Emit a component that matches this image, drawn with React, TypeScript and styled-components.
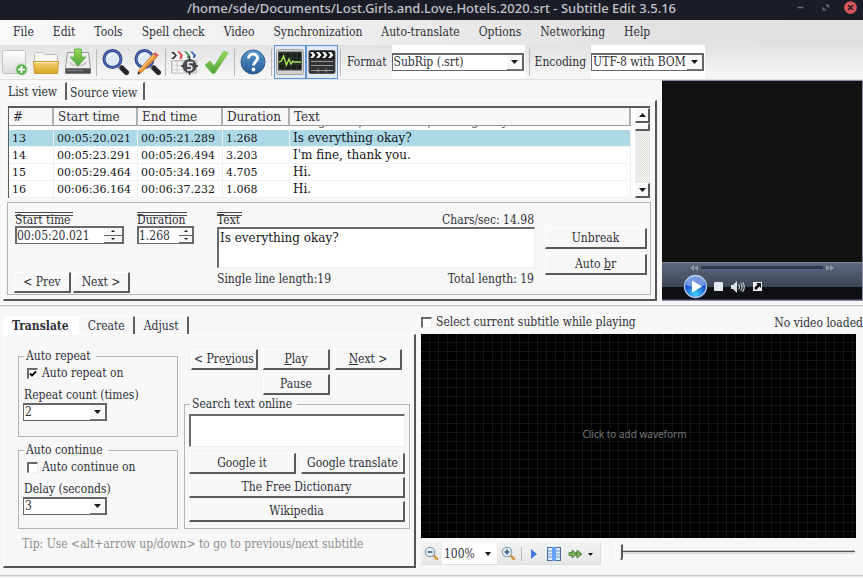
import React, { useState } from "react";
import styled, { createGlobalStyle, css } from "styled-components";

const face = "#f7f7f7";
const ink = "#303038";
const dark = "#4a4a4a";
const soft = "#b4b4b4";
const uiFont = '"DejaVu Serif Condensed", "DejaVu Serif", serif';

const raised = css`
  border-style: solid;
  border-width: 1px 2px 2px 1px;
  border-color: #ffffff #5a5a5a #5a5a5a #ffffff;
`;

const sunken = css`
  border-style: solid;
  border-width: 2px 1px 1px 2px;
  border-color: #6a6a6a #eeeeee #eeeeee #6a6a6a;
`;

const GlobalStyle = createGlobalStyle`
  * { box-sizing: border-box; }
  body { margin: 0; background: ${face}; color: ${ink}; font: 12px/16px ${uiFont}; }
  button, input, select, textarea { font: inherit; color: inherit; margin: 0; border-radius: 0; }
  button { padding: 0; cursor: default; white-space: nowrap; }
  svg { display: block; }
`;

const Window = styled.div`
  min-height: 100vh;
  display: flex;
  flex-direction: column;
  background: ${face};
`;

const TitleBar = styled.header`
  height: 20px;
  display: grid;
  grid-template-columns: 1fr auto 1fr;
  background: #1b1d26;
`;

const Title = styled.h1`
  grid-column: 2;
  margin: 0;
  font: 500 13px/16px "Noto Sans", sans-serif;
  color: #c2c4c8;
  white-space: nowrap;
`;

const WindowButtons = styled.div`
  display: flex;
  justify-content: flex-end;
  gap: 10px;
  padding: 0 5px 0 0;
`;

const WindowButton = styled.button`
  width: 15px;
  height: 15px;
  border: 0;
  background: none;
`;

const MenuBar = styled.nav`
  height: 25px;
  display: flex;
  gap: 19px;
  padding: 0 13px;
  background: linear-gradient(90deg, #f9f9f9, #e2e2e2 75%, #e0e0e0);
`;

const MenuItem = styled.button`
  height: 23px;
  border: 0;
  background: none;
`;

const ToolBar = styled.div`
  height: 35px;
  display: flex;
  align-items: stretch;
  background: linear-gradient(#e2e2e2, #f7f7f7);
  border-bottom: 1px solid #e0e0e0;
`;

const ToolButton = styled.button<{ $active?: boolean; $narrow?: boolean }>`
  width: ${(p) => (p.$narrow ? 30 : 32)}px;
  flex: none;
  display: flex;
  align-items: center;
  justify-content: center;
  background: ${(p) => (p.$active ? "#e2e9f5" : "transparent")};
  border: 1px solid ${(p) => (p.$active ? "#5c93d6" : "transparent")};
`;

const Separator = styled.span<{ $small?: boolean }>`
  width: 1px;
  flex: none;
  margin: ${(p) => (p.$small ? "4px 1px 3px 4px" : "4px 2px 3px")};
  background: #b9b9b9;
`;

const ToolLabel = styled.label`
  align-self: center;
  padding: 0 5px 0 4px;
`;

const ComboSlot = styled.div`
  display: flex;
  align-items: center;
  background: #ffffff;
  padding-right: 1px;
`;

const ComboBox = styled.span<{ $width: number }>`
  width: ${(p) => p.$width}px;
  height: 18px;
  display: grid;
  grid-template-columns: 1fr 15px;
  background: #ffffff;
  border: 1px solid #666666;
  border-width: 2px 2px 1px 1px;
`;

const NativeSelect = styled.select`
  grid-area: 1 / 1 / 2 / 3;
  min-width: 0;
  height: 15px;
  line-height: 15px;
  padding: 0 0 0 1px;
  border: 0;
  outline: 0;
  background: transparent;
  appearance: none;
`;

const ComboArrow = styled.span`
  grid-area: 1 / 2;
  display: flex;
  align-items: center;
  justify-content: center;
  background: ${face};
  border-bottom: 1px solid #777777;
  pointer-events: none;
`;

const Upper = styled.section`
  display: grid;
  grid-template-columns: minmax(0, 1fr) 201px;
  gap: 5px;
`;

const Lower = styled.section`
  display: grid;
  grid-template-columns: 416px minmax(0, 1fr);
  gap: 5px;
`;

const Splitter = styled.hr`
  width: 100%;
  height: 3px;
  margin: 4px 0 0;
  border: 0;
  border-top: 1px solid #c9c9c9;
  border-bottom: 1px solid #ffffff;
  background: #e2e2e2;
`;

const Tabbed = styled.div<{ $inset: number }>`
  padding: ${(p) => p.$inset}px 0 0 3px;
  min-width: 0;
`;

const TabStrip = styled.div`
  height: 18px;
  display: flex;
`;

const Tab = styled.button<{ $selected?: boolean; $white?: boolean }>`
  padding: ${(p) => (p.$selected ? "0 8px 0 9px" : "0 8px 0 9px")};
  border: 0;
  border-top: 1px solid #ffffff;
  border-right: 2px solid ${(p) => (p.$white ? "#ffffff" : "#5f5f5f")};
  background: ${(p) => (p.$white ? "#ffffff" : face)};
  font-weight: ${(p) => (p.$white ? "bold" : "normal")};
`;

const ListTab = styled(Tab)`
  padding: ${(p) => (p.$selected ? "0 8px 0 5px" : "2px 6px 0 3px")};
`;

const TabPage = styled.div<{ $pad: string }>`
  padding: ${(p) => p.$pad};
  border: solid #ffffff;
  border-width: 1px 2px 2px 1px;
  border-right-color: #555555;
  border-bottom-color: #555555;
`;

const ListFrame = styled.div`
  height: 92px;
  display: flex;
  gap: 4px;
  background: #ffffff;
  border: solid #5c5c5c;
  border-width: 2px 0 0 1px;
  overflow: hidden;
`;

const SubtitleTable = styled.table`
  flex: 1;
  min-width: 0;
  table-layout: fixed;
  border-collapse: separate;
  border-spacing: 0;
  font-family: "DejaVu Serif", serif;
  font-size: 11px;
  color: #15151a;
`;

const Column = styled.col<{ $width?: number }>`
  width: ${(p) => (p.$width ? `${p.$width}px` : "auto")};
`;

const HeadCell = styled.th`
  height: 18px;
  padding: 0 4px;
  text-align: left;
  font-size: 12px;
  font-weight: normal;
  line-height: 16px;
  color: ${ink};
  background: ${face};
  border-right: 2px solid #b0b0b0;
  border-bottom: 1px solid #999999;
`;

const BodyRow = styled.tr<{ $selected?: boolean }>`
  background: ${(p) => (p.$selected ? "#add8e6" : "#ffffff")};
`;

const BodyCell = styled.td`
  height: 17px;
  padding: 1px 2px 0 3px;
  line-height: 15px;
  white-space: nowrap;
  border-right: 1px solid #eeeeee;
  border-bottom: 1px solid #f2f2f2;

  &:last-child { font-size: 12px; }
`;

const ClippedCell = styled.td`
  height: 4px;
  padding: 0 3px;
`;

const ClippedText = styled.div`
  height: 4px;
  display: flex;
  align-items: flex-end;
  overflow: hidden;
  line-height: 14px;
  white-space: nowrap;
`;

const ScrollBar = styled.div`
  width: 15px;
  flex: none;
  display: flex;
  flex-direction: column;
  background: repeating-conic-gradient(#e2e0dc 0 25%, #f6f5f3 0 50%) 0 0 / 2px 2px;
`;

const ScrollButton = styled.button`
  ${raised}
  height: 15px;
  display: flex;
  align-items: center;
  justify-content: center;
  background: ${face};
`;

const ScrollThumb = styled.span`
  ${raised}
  height: 8px;
  margin-bottom: auto;
  background: ${face};
`;

const EditGroup = styled.div`
  height: 93px;
  display: flex;
  margin: 4px -1px 0 -1px;
  padding: 9px 3px 0 6px;
  border: 1px solid ${soft};
`;

const TimeColumn = styled.div`
  width: 203px;
  flex: none;
  display: flex;
  flex-direction: column;
  justify-content: space-between;
  padding-bottom: 1px;
`;

const FieldRow = styled.div`
  display: flex;
  gap: 13px;
  padding-left: 1px;
`;

const Field = styled.div`
  display: flex;
  flex-direction: column;
  align-items: flex-start;
`;

const LinedLabel = styled.label`
  height: 14px;
  padding-right: 2px;
  line-height: 16px;
  background:
    linear-gradient(${dark}, ${dark}) 0 0 / 100% 1px no-repeat,
    linear-gradient(${dark}, ${dark}) 0 3px / 100% 1px no-repeat;
`;

const Spinner = styled.div<{ $width: number }>`
  width: ${(p) => p.$width}px;
  height: 18px;
  display: flex;
  background: #ffffff;
  border: solid #6a6a6a;
  border-width: 2px 2px 1px 2px;
`;

const SpinInput = styled.input`
  flex: 1;
  min-width: 0;
  height: 15px;
  padding: 0;
  border: 0;
  outline: 0;
  background: transparent;
`;

const SpinButtons = styled.div<{ $width: number }>`
  width: ${(p) => p.$width}px;
  display: flex;
  flex-direction: column;
`;

const SpinButton = styled.button`
  flex: 1;
  min-height: 0;
  display: flex;
  align-items: center;
  justify-content: center;
  border: 0;
  border-bottom: 1px solid #666666;
  background: ${face};
`;

const ButtonRow = styled.div<{ $gap: number }>`
  display: flex;
  gap: ${(p) => p.$gap}px;
`;

const PushButton = styled.button<{ $width?: number }>`
  ${raised}
  ${(p) => (p.$width ? `width: ${p.$width}px;` : "flex: 1;")}
  height: 21px;
  flex-shrink: 0;
  line-height: 16px;
  background: ${face};
`;

const TextColumn = styled.div`
  flex: 1;
  min-width: 0;
`;

const SpreadRow = styled.div`
  height: 15px;
  display: flex;
  justify-content: space-between;
  padding-right: 1px;
`;

const TextArea = styled.textarea<{ $height: number }>`
  ${sunken}
  display: block;
  width: 100%;
  height: ${(p) => p.$height}px;
  margin-bottom: 3px;
  padding: 1px;
  resize: none;
  outline: 0;
  background: #ffffff;
  color: #15151a;
  font: 12px/16px "DejaVu Serif", serif;
`;

const BreakColumn = styled.div`
  width: 112px;
  flex: none;
  display: flex;
  flex-direction: column;
  gap: 5px;
  padding: 16px 0 0 10px;

  > button { flex: none; }
`;

const Video = styled.div`
  display: flex;
  flex-direction: column;
  background: #111111;
  border: solid #8d8da8;
  border-width: 1px 1px 1px 0;
`;

const Screen = styled.div`
  flex: 1;
`;

const Player = styled.div`
  height: 38px;
  background: linear-gradient(#5d6780, #3d4454 24px, #0f1014 24px, #0f1014);
  border-top: 1px solid #7b849a;
  border-bottom: 1px solid #34365c;
`;

const SeekRow = styled.div`
  height: 10px;
  display: flex;
  align-items: center;
  gap: 3px;
  padding: 0 28px;
`;

const SeekTrack = styled.span`
  flex: 1;
  height: 5px;
  background: #343949;
  border-bottom: 2px solid #566288;
`;

const PlayerButtons = styled.div`
  display: flex;
  align-items: center;
  padding: 1px 0 0 21px;
  gap: 6px;
`;

const IconButton = styled.button<{ $width: number }>`
  width: ${(p) => p.$width}px;
  flex: none;
  display: flex;
  align-items: center;
  justify-content: center;
  border: 0;
  background: none;
`;

const TranslateGrid = styled.div`
  display: grid;
  grid-template-columns: 160px minmax(0, 1fr);
  column-gap: 6px;
`;

const Stack = styled.div`
  display: flex;
  flex-direction: column;
  gap: 5px;
`;

const Group = styled.fieldset<{ $height: number }>`
  height: ${(p) => p.$height}px;
  min-width: 0;
  margin: 0;
  padding: 0 4px;
  border: 1px solid ${soft};
`;

const Legend = styled.legend`
  margin-left: 1px;
  padding: 0 5px 0 2px;
  line-height: 16px;
`;

const CheckRow = styled.label<{ $indent: number }>`
  display: flex;
  align-items: center;
  gap: 4px;
  height: 18px;
  padding-left: ${(p) => p.$indent}px;
`;

const Check = styled.input`
  ${sunken}
  appearance: none;
  width: 11px;
  height: 11px;
  margin: 0;
  background: #ffffff;

  &:checked {
    background: #ffffff
      url("data:image/svg+xml,%3Csvg xmlns='http://www.w3.org/2000/svg' viewBox='0 0 8 8'%3E%3Cpath d='M1 3.4 3 5.6 7 1.4' fill='none' stroke='%23000' stroke-width='2'/%3E%3C/svg%3E")
      center / 8px 8px no-repeat;
  }
`;

const BlockLabel = styled.label`
  display: block;
  margin-top: 5px;
  padding-left: 1px;
  line-height: 16px;
`;

const PlayGrid = styled.div`
  display: grid;
  grid-template-columns: repeat(3, 67px);
  align-content: start;
  gap: 4px 5px;
  padding: 1px 0 0 7px;
  height: 48px;

  > button:last-child { grid-column: 2; }
`;

const SearchStack = styled.div`
  display: flex;
  flex-direction: column;
  gap: 3px;
  padding-top: 2px;

  > button { flex: none; }
`;

const Tip = styled.p`
  margin: 7px 0 0 4px;
  color: #8e8e8e;
  white-space: nowrap;
`;

const WavePane = styled.div`
  display: flex;
  flex-direction: column;
  padding-top: 5px;
  min-width: 0;
`;

const WaveHeader = styled.div`
  height: 21px;
  display: flex;
  justify-content: space-between;
  align-items: flex-start;
  line-height: 20px;
  white-space: nowrap;
`;

const Waveform = styled.div`
  height: 204px;
  display: flex;
  align-items: center;
  justify-content: center;
  margin-right: 7px;
  padding: 0 8px 5px 0;
  background:
    linear-gradient(90deg, transparent 8px, #141414 8px) 0 0 / 9px 9px,
    linear-gradient(transparent 8px, #141414 8px) 0 0 / 9px 9px,
    #000000;
  font: 10px/14px "Noto Sans", sans-serif;
  color: #77777a;
`;

const WaveControls = styled.div`
  display: flex;
  align-items: flex-start;
  gap: 13px;
  padding: 5px 8px 0 0;
`;

const WaveTools = styled.div`
  width: 180px;
  height: 22px;
  flex: none;
  display: flex;
  align-items: stretch;
  background: linear-gradient(#f2f2f2, #e6e6e6);
  border: solid #dddddd;
  border-width: 0 1px 1px 0;
`;

const ZoomBox = styled.span`
  width: 55px;
  display: grid;
  grid-template-columns: 1fr 18px;
  align-items: center;
  padding-left: 1px;
  background: #ffffff;
`;

const ZoomSelect = styled(NativeSelect)`
  height: 18px;
  line-height: 16px;
`;

const ZoomArrow = styled.span`
  grid-area: 1 / 2;
  display: flex;
  justify-content: center;
  pointer-events: none;
`;

const Slider = styled.input`
  flex: 1;
  min-width: 0;
  height: 18px;
  margin: 0;
  appearance: none;
  background: linear-gradient(#c9c9c9 1px, #555555 1px, #555555 2px, #dedede 2px) 0 7px / 100% 4px no-repeat;

  &::-webkit-slider-thumb {
    appearance: none;
    width: 9px;
    height: 17px;
    background: ${face};
    border: solid #ffffff;
    border-width: 1px 2px 1px 1px;
    border-right-color: #555555;
    border-radius: 0 0 4px 4px;
  }
`;

const BottomLine = styled(Splitter)`
  margin-top: 7px;
`;

const Arrow = ({ up = false, w = 7 }: { up?: boolean; w?: number }) => (
  <svg width={w} height={w > 4 ? 4 : 2} viewBox="0 0 7 4" preserveAspectRatio="none" aria-hidden>
    <path d={up ? "M0 4 3.5 0 7 4Z" : "M0 0 3.5 4 7 0Z"} fill="#15151c" />
  </svg>
);

const Combo = ({ id, width, options }: { id: string; width: number; options: string[] }) => (
  <ComboBox $width={width}>
    <NativeSelect id={id}>
      {options.map((o) => (
        <option key={o}>{o}</option>
      ))}
    </NativeSelect>
    <ComboArrow>
      <Arrow />
    </ComboArrow>
  </ComboBox>
);

const Spin = ({ id, width, value, step }: { id: string; width: number; value: string; step: number }) => (
  <Spinner $width={width}>
    <SpinInput id={id} defaultValue={value} />
    <SpinButtons $width={step}>
      <SpinButton aria-label="Increase">
        <Arrow up w={4} />
      </SpinButton>
      <SpinButton aria-label="Decrease">
        <Arrow w={4} />
      </SpinButton>
    </SpinButtons>
  </Spinner>
);

const Lens = () => (
  <>
    <path d="m18 18 7 7" stroke="#8f9298" strokeWidth="4" />
    <path d="m21 20 4.500 4.500" stroke="#25262b" strokeWidth="5" strokeLinecap="round" />
    <circle cx="11.5" cy="11" r="8.500" fill="#dfeaf5" stroke="#2c3f88" strokeWidth="3" />
    <circle cx="11.5" cy="11" r="8.500" fill="none" stroke="#5878c8" strokeWidth="1" />
    <path d="M6 11c0-4 3-6 7-5-3 1-5 2-7 5Z" fill="#fff" />
  </>
);

const Icon = ({ name }: { name: string }) => (
  <svg width="28" height="28" viewBox="0 0 28 28" fill="none" aria-hidden>
    <defs>
      <linearGradient id="paper" x2="0" y2="1"><stop stopColor="#fff" /><stop offset="1" stopColor="#dcdcdc" /></linearGradient>
      <linearGradient id="gold" x2="0" y2="1"><stop stopColor="#f7d478" /><stop offset="1" stopColor="#dba520" /></linearGradient>
      <linearGradient id="leaf" x2="0" y2="1"><stop stopColor="#9bd85a" /><stop offset="1" stopColor="#4ba53a" /></linearGradient>
      <linearGradient id="sky" x2="0" y2="1"><stop stopColor="#5b9bd0" /><stop offset="1" stopColor="#24588f" /></linearGradient>
    </defs>
    {name === "new" && (
      <>
        <rect x="1.5" y="2.5" width="23" height="23" rx="2" fill="url(#paper)" stroke="#c2c2c2" />
        <circle cx="20.5" cy="21.5" r="5.5" fill="#55ae4b" stroke="#a9d8a0" />
        <path d="M20.5 18v7M17 21.5h7" stroke="#fff" strokeWidth="2" />
      </>
    )}
    {name === "open" && (
      <>
        <path d="M2.5 14V5.5l1-1h7l2 2h12l1 1V14Z" fill="#f6f6f6" stroke="#bdbdbd" />
        <path d="M1.5 13.5h25l-1 12h-23Z" fill="url(#gold)" stroke="#c89b2c" />
        <path d="M2.5 14.5h23" stroke="#fff1bd" />
      </>
    )}
    {name === "save" && (
      <>
        <path d="M3.5 4.5h21l2 15v5.5h-25v-5.5Z" fill="#eeeeee" stroke="#999" />
        <path d="M1.5 20.5h25v5h-25Z" fill="#4c4d4f" stroke="#77797b" />
        <path d="M3 22.5h16" stroke="#777" strokeWidth="1.5" />
        <path d="M6 14c2 5 14 5 16 0" stroke="#c6c6c6" strokeWidth="2" />
        <path d="M10.5 1h7v8H22l-8 9-8-9h4.5Z" fill="url(#leaf)" stroke="#5aad45" strokeWidth=".8" />
      </>
    )}
    {name === "find" && <Lens />}
    {name === "replace" && (
      <>
        <Lens />
        <path d="m5 26 1-4L20 6l4 3L9 24Z" fill="#ee9438" stroke="#b46a25" strokeWidth=".7" />
        <path d="m7 22 14-15" stroke="#ffc078" strokeWidth="1.2" />
        <path d="m20 6 2-2 4 3-2 2Z" fill="#d96565" />
        <path d="m4.500 26.500.8-3 2 2Z" fill="#222" />
      </>
    )}
    {name === "visual" && (
      <>
        <path d="M1.5 12.500h25v12.500h-25Z" fill="#dedede" stroke="#b9b9b9" />
        <path d="M2 4h24v8H2Z" fill="#f4f4f4" />
        <path d="m1 4 4 3.5L1 11h3l3-3.500L4 4Z" fill="#303030" />
        <path d="M7 3.500h2.500l3.500 3.500-1.500 4H9.500l1-4Z" fill="#d84b3f" />
        <path d="M14 3.500h2.500L20 7l-1.500 3H17l.5-3Z" fill="#3b9a4d" />
        <path d="M20 3.500h2.500L26 7l-1 3h-2l.5-3Z" fill="#3b67c0" />
        <path d="M3 15.5h9M3 19.5h9M3 23.500h10" stroke="#f8f8f8" strokeWidth="2" />
        <path d="M7 13v11" stroke="#c9c9c9" />
        <circle cx="19.500" cy="18" r="7" fill="#4b4c4f" />
        <path d="M19.500 8v4M11 18h3M25 18h3M19.500 24v3" stroke="#333" strokeWidth="1.5" />
        <path d="M23 14.500h-5V18q4-.5 4 2t-5 2" stroke="#eee" strokeWidth="1.6" />
      </>
    )}
    {name === "video" && (
      <>
        <rect x="1" y="2.500" width="26" height="23" rx="1.5" fill="#303133" stroke="#55575a" />
        <path d="M1.500 3h25v8h-25Z" fill="#17181a" />
        <path d="M2 4h3l2.500 3L5 10H2l2.500-3ZM8 4h3l2.500 3L11 10H8l2.500-3ZM14 4h3l2.500 3-2.500 3h-3l2.500-3ZM20 4h3l2.500 3-2.500 3h-3l2.500-3Z" fill="#f4f4f4" />
        <path d="M3 13.5h22M3 17.500h22M3 22.500h22M10 20.500v4M18 20.500v4" stroke="#9a9b9d" />
      </>
    )}
    {name === "check" && <path d="m3 17 5-4 4 5L22 3l4 2-13 20c-1 1-3 1-4-1Z" fill="url(#leaf)" stroke="#6ebb4c" strokeWidth=".8" />}
    {name === "help" && (
      <>
        <circle cx="14" cy="14" r="12" fill="url(#sky)" stroke="#2f5f95" />
        <path d="M9.5 10.500c0-6 9.500-5.500 9 0-.3 3-4 3.500-4 7" stroke="#fff" strokeWidth="2.800" />
        <circle cx="14.5" cy="21.500" r="1.900" fill="#fff" />
      </>
    )}
    {name === "wave" && (
      <>
        <rect x=".5" y="1.5" width="27" height="25" rx="2" fill="#cfcfcf" stroke="#a5a5a5" />
        <rect x="2.5" y="4" width="23" height="18" fill="#1c211c" stroke="#555" />
        <path d="M3 10h22M3 16h22M9 4v18M15 4v18M21 4v18" stroke="#3a423a" strokeWidth=".7" />
        <path d="m3 14 2.500-1 2-5 3 9 2.500-6 2 5 2-3 1 1h7" stroke="#a4e35b" strokeWidth="1.4" />
      </>
    )}
  </svg>
);

const Zoom = ({ plus = false }: { plus?: boolean }) => (
  <svg width="15" height="15" viewBox="0 0 15 15" fill="none" aria-hidden>
    <path d="m9 9 4 4" stroke="#c99a4a" strokeWidth="2.5" strokeLinecap="round" />
    <circle cx="6" cy="6" r="4.7" fill="#e6f3fc" stroke="#8fa5b6" strokeWidth="1.3" />
    <path d={plus ? "M3.5 6h5M6 3.5v5" : "M3.5 6h5"} stroke="#31587d" strokeWidth="1.6" />
  </svg>
);

const Seek = ({ back = false }: { back?: boolean }) => (
  <svg width="8" height="6" viewBox="0 0 8 6" aria-hidden>
    <path d={back ? "M4 0v6L0 3ZM8 0v6L4 3Z" : "M0 0v6l4-3ZM4 0v6l4-3Z"} fill="#8f97a8" />
  </svg>
);

const menus = ["File", "Edit", "Tools", "Spell check", "Video", "Synchronization", "Auto-translate", "Options", "Networking", "Help"];

const lines = [
  ["13", "00:05:20.021", "00:05:21.289", "1.268", "Is everything okay?"],
  ["14", "00:05:23.291", "00:05:26.494", "3.203", "I'm fine, thank you."],
  ["15", "00:05:29.464", "00:05:34.169", "4.705", "Hi."],
  ["16", "00:06:36.164", "00:06:37.232", "1.068", "Hi."],
];

const tools = [
  ["new", "New"], ["open", "Open"], ["save", "Save"], ["|", "a"],
  ["find", "Find"], ["replace", "Replace"], ["|", "b"],
  ["visual", "Visual sync"], ["check", "Fix common errors"], ["|", "c"],
  ["help", "Help"], ["|", "d"],
  ["wave", "Toggle waveform"], ["video", "Toggle video"], ["|", "e"],
];

export default function App() {
  const [selected, setSelected] = useState("13");
  return (
    <Window>
      <GlobalStyle />
      <TitleBar>
        <Title>/home/sde/Documents/Lost.Girls.and.Love.Hotels.2020.srt - Subtitle Edit 3.5.16</Title>
        <WindowButtons>
          <WindowButton aria-label="Minimize">
            <svg width="15" height="15"><path d="M4.500 7.500h6" stroke="#60716f" strokeWidth="1.5" /></svg>
          </WindowButton>
          <WindowButton aria-label="Restore">
            <svg width="15" height="15"><path d="M7 4.500h4v4ZM4.500 6.500v4h4Z" fill="#60716f" /></svg>
          </WindowButton>
          <WindowButton aria-label="Close">
            <svg width="15" height="15">
              <circle cx="7.5" cy="7.5" r="6.3" fill="#d6565b" />
              <path d="m5 5 5 5m0-5-5 5" stroke="#2b1c22" strokeWidth="1.6" />
            </svg>
          </WindowButton>
        </WindowButtons>
      </TitleBar>
      <MenuBar>
        {menus.map((m) => <MenuItem key={m}>{m}</MenuItem>)}
      </MenuBar>
      <ToolBar>
        {tools.map(([name, title]) =>
          name === "|" ? (
            <Separator key={title} />
          ) : (
            <ToolButton key={name} aria-label={title} $narrow={name === "new"} $active={name === "wave" || name === "video"}>
              <Icon name={name} />
            </ToolButton>
          )
        )}
        <ToolLabel htmlFor="format">Format</ToolLabel>
        <ComboSlot>
          <Combo id="format" width={132} options={["SubRip (.srt)"]} />
        </ComboSlot>
        <Separator $small />
        <ToolLabel htmlFor="encoding">Encoding</ToolLabel>
        <ComboSlot>
          <Combo id="encoding" width={113} options={["UTF-8 with BOM"]} />
        </ComboSlot>
      </ToolBar>

      <Upper>
        <Tabbed $inset={2}>
          <TabStrip role="tablist">
            <ListTab role="tab" $selected>List view</ListTab>
            <ListTab role="tab">Source view</ListTab>
          </TabStrip>
          <TabPage $pad="5px 5px 4px 4px">
            <ListFrame>
              <SubtitleTable>
                <colgroup>
                  <Column $width={45} />
                  <Column $width={84} />
                  <Column $width={85} />
                  <Column $width={67} />
                  <Column />
                </colgroup>
                <thead>
                  <tr>
                    {["#", "Start time", "End time", "Duration", "Text"].map((h) => <HeadCell key={h}>{h}</HeadCell>)}
                  </tr>
                </thead>
                <tbody>
                  <BodyRow>
                    <ClippedCell colSpan={4} />
                    <ClippedCell>
                      <ClippedText>Being there, it seems so, is being okay</ClippedText>
                    </ClippedCell>
                  </BodyRow>
                  {lines.map((row) => (
                    <BodyRow key={row[0]} $selected={row[0] === selected} onClick={() => setSelected(row[0])}>
                      {row.map((cell, i) => <BodyCell key={i}>{cell}</BodyCell>)}
                    </BodyRow>
                  ))}
                </tbody>
              </SubtitleTable>
              <ScrollBar>
                <ScrollButton aria-label="Scroll up"><Arrow up /></ScrollButton>
                <ScrollThumb />
                <ScrollButton aria-label="Scroll down"><Arrow /></ScrollButton>
              </ScrollBar>
            </ListFrame>
            <EditGroup>
              <TimeColumn>
                <FieldRow>
                  <Field>
                    <LinedLabel htmlFor="start">Start time</LinedLabel>
                    <Spin id="start" width={109} value="00:05:20.021" step={18} />
                  </Field>
                  <Field>
                    <LinedLabel htmlFor="duration">Duration</LinedLabel>
                    <Spin id="duration" width={57} value="1.268" step={13} />
                  </Field>
                </FieldRow>
                <ButtonRow $gap={2}>
                  <PushButton $width={57}>&lt; Prev</PushButton>
                  <PushButton $width={57}>Next &gt;</PushButton>
                </ButtonRow>
              </TimeColumn>
              <TextColumn>
                <SpreadRow>
                  <LinedLabel htmlFor="text">Text</LinedLabel>
                  <span>Chars/sec: 14.98</span>
                </SpreadRow>
                <TextArea id="text" $height={41} defaultValue="Is everything okay?" />
                <SpreadRow>
                  <span>Single line length:19</span>
                  <span>Total length: 19</span>
                </SpreadRow>
              </TextColumn>
              <BreakColumn>
                <PushButton>Unbreak</PushButton>
                <PushButton>Auto <u>b</u>r</PushButton>
              </BreakColumn>
            </EditGroup>
          </TabPage>
        </Tabbed>
        <Video>
          <Screen />
          <Player>
            <SeekRow>
              <Seek back />
              <SeekTrack />
              <Seek />
            </SeekRow>
            <PlayerButtons>
              <IconButton $width={25} aria-label="Play">
                <svg width="25" height="25" viewBox="0 0 25 25">
                  <defs>
                    <radialGradient id="orb" cy=".85"><stop stopColor="#3fd0ff" /><stop offset="1" stopColor="#1c56cf" /></radialGradient>
                  </defs>
                  <circle cx="12.5" cy="12.5" r="11" fill="url(#orb)" stroke="#a9c4ea" strokeWidth="1.3" />
                  <path d="M3 11a9.5 9.5 0 0 1 19 0c-6 2-13 2-19 0Z" fill="#fff" opacity=".4" />
                  <path d="M9 6.500v12l10-6Z" fill="#fff" />
                </svg>
              </IconButton>
              <IconButton $width={9} aria-label="Stop">
                <svg width="9" height="9"><rect width="9" height="9" rx="1" fill="#e6e8ef" /></svg>
              </IconButton>
              <IconButton $width={18} aria-label="Volume">
                <svg width="14" height="12" viewBox="0 0 14 12" fill="none">
                  <path d="M0 4h2l4-4v12L2 8H0Z" fill="#dfe1e8" />
                  <path d="M7.500 3.500q2 2.500 0 5M9.500 2q3 4 0 8M11.500 1q3.500 5 0 10" stroke="#c6c9d2" strokeWidth="1.2" />
                </svg>
              </IconButton>
              <IconButton $width={9} aria-label="Full screen">
                <svg width="9" height="9"><rect width="9" height="9" fill="#eeeef2" /><path d="M3 1h5v5L6.500 4.500 3 8 1 6l3.500-3.500Z" fill="#17181d" /></svg>
              </IconButton>
            </PlayerButtons>
          </Player>
        </Video>
      </Upper>

      <Splitter />

      <Lower>
        <Tabbed $inset={8}>
          <TabStrip role="tablist">
            <Tab role="tab" $selected $white>Translate</Tab>
            <Tab role="tab">Create</Tab>
            <Tab role="tab">Adjust</Tab>
          </TabStrip>
          <TabPage $pad="13px 4px 14px 14px">
            <TranslateGrid>
              <Stack>
                <Group $height={89}>
                  <Legend>Auto repeat</Legend>
                  <CheckRow $indent={4}>
                    <Check type="checkbox" defaultChecked />
                    Auto repeat on
                  </CheckRow>
                  <BlockLabel htmlFor="count">Repeat count (times)</BlockLabel>
                  <Combo id="count" width={84} options={["2", "3"]} />
                </Group>
                <Group $height={87}>
                  <Legend>Auto continue</Legend>
                  <CheckRow $indent={4}>
                    <Check type="checkbox" />
                    Auto continue on
                  </CheckRow>
                  <BlockLabel htmlFor="delay">Delay (seconds)</BlockLabel>
                  <Combo id="delay" width={84} options={["3", "4"]} />
                </Group>
              </Stack>
              <div>
                <PlayGrid>
                  <PushButton $width={67}>&lt; Pre<u>v</u>ious</PushButton>
                  <PushButton $width={67}><u>P</u>lay</PushButton>
                  <PushButton $width={67}><u>N</u>ext &gt;</PushButton>
                  <PushButton $width={67}>Pause</PushButton>
                </PlayGrid>
                <Group $height={133}>
                  <Legend>Search text online</Legend>
                  <SearchStack>
                    <TextArea $height={33} aria-label="Search text online" />
                    <ButtonRow $gap={5}>
                      <PushButton $width={107}>Google it</PushButton>
                      <PushButton>Google translate</PushButton>
                    </ButtonRow>
                    <PushButton>The Free Dictionary</PushButton>
                    <PushButton>Wikipedia</PushButton>
                  </SearchStack>
                </Group>
              </div>
            </TranslateGrid>
            <Tip>Tip: Use &lt;alt+arrow up/down&gt; to go to previous/next subtitle</Tip>
          </TabPage>
        </Tabbed>
        <WavePane>
          <WaveHeader>
            <CheckRow $indent={0}>
              <Check type="checkbox" />
              Select current subtitle while playing
            </CheckRow>
            <span>No video loaded</span>
          </WaveHeader>
          <Waveform>Click to add waveform</Waveform>
          <WaveControls>
            <WaveTools>
              <IconButton $width={21} aria-label="Zoom out"><Zoom /></IconButton>
              <ZoomBox>
                <ZoomSelect aria-label="Zoom"><option>100%</option></ZoomSelect>
                <ZoomArrow><Arrow w={6} /></ZoomArrow>
              </ZoomBox>
              <IconButton $width={22} aria-label="Zoom in"><Zoom plus /></IconButton>
              <Separator />
              <IconButton $width={20} aria-label="Play">
                <svg width="8" height="12"><path d="M1 1v10l6-5Z" fill="#3d7be0" /></svg>
              </IconButton>
              <IconButton $width={19} aria-label="Center">
                <svg width="14" height="14" viewBox="0 0 14 14">
                  <rect x=".5" y=".5" width="13" height="13" fill="#dcecff" stroke="#49699c" />
                  <path d="M1 4h12M1 7h12M1 10h12" stroke="#6d91c5" />
                  <path d="M5 0h4v14H5Z" fill="#64a0f5" />
                </svg>
              </IconButton>
              <IconButton $width={36} aria-label="Playback speed">
                <svg width="26" height="10" viewBox="0 0 26 10">
                  <path d="M1 3.500h3V1l5 4-5 4V6.500H1ZM8 3.500h1V1l5 4-5 4V6.500H8Z" fill="#79b357" stroke="#47733a" strokeWidth=".8" />
                  <path d="M20 4h5l-2.500 3Z" fill="#111" />
                </svg>
              </IconButton>
            </WaveTools>
            <Slider type="range" defaultValue={0} aria-label="Position" />
          </WaveControls>
        </WavePane>
      </Lower>
      <BottomLine />
    </Window>
  );
}
